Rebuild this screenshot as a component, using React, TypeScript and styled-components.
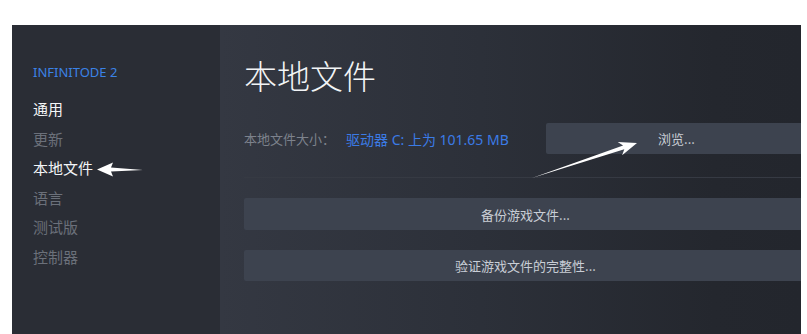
import React from "react"
import styled, { createGlobalStyle } from "styled-components"

const GlobalStyle = createGlobalStyle`
  html, body {
    margin: 0;
    padding: 0;
    background: #ffffff;
    font-family: "Noto Sans", "Noto Sans CJK SC", sans-serif;
  }
`

const navItems = [
  { label: "通用", active: true },
  { label: "更新", active: false },
  { label: "本地文件", active: true },
  { label: "语言", active: false },
  { label: "测试版", active: false },
  { label: "控制器", active: false },
]

export default function App() {
  return (
    <>
      <GlobalStyle />
      <Page>
        <Frame>
          <Sidebar>
            <GameTitle>INFINITODE 2</GameTitle>
            <NavList>
              {navItems.map((item) => (
                <NavItem key={item.label} $active={item.active}>
                  {item.label}
                </NavItem>
              ))}
            </NavList>
          </Sidebar>
          <Main>
            <Content>
              <Title>本地文件</Title>
              <InfoRow>
                <InfoText>
                  <Label>本地文件大小：</Label>
                  <Value>驱动器 C: 上为 101.65 MB</Value>
                </InfoText>
                <ActionButton $h={31}>浏览...</ActionButton>
              </InfoRow>
              <Divider />
              <ButtonStack>
                <ActionButton $h={32}>备份游戏文件...</ActionButton>
                <ActionButton $h={31}>验证游戏文件的完整性...</ActionButton>
              </ButtonStack>
            </Content>
          </Main>
        </Frame>
        <Arrows width="807" height="334" viewBox="0 0 807 334">
          <polygon
            fill="#ffffff"
            points="97,169.5 113,162.5 111,167.5 143,170 111,171.5 113,176.5"
          />
          <polygon
            fill="#ffffff"
            points="637,143 617.7,142.1 623.1,145.5 532,178 624.3,149.3 622.1,155.3"
          />
        </Arrows>
      </Page>
    </>
  )
}

const Page = styled.div`
  position: relative;
  width: 807px;
  height: 334px;
  overflow: hidden;
`

const Frame = styled.div`
  display: flex;
  margin: 25px 6px 0 12px;
  height: 309px;
`

const Sidebar = styled.div`
  width: 208px;
  flex-shrink: 0;
  background: #2a2d35;
  padding: 37px 0 0 21px;
  box-sizing: border-box;
`

const GameTitle = styled.div`
  font-family: "Noto Sans", sans-serif;
  font-size: 13px;
  line-height: 20px;
  color: #3b82e6;
  margin-bottom: 12px;
`

const NavList = styled.div`
  display: flex;
  flex-direction: column;
`

const NavItem = styled.div<{ $active: boolean }>`
  font-family: "Noto Sans CJK SC", sans-serif;
  font-size: 15px;
  line-height: 29.5px;
  color: ${(p) => (p.$active ? "#f3f5f7" : "#6b707a")};
`

const Main = styled.div`
  flex: 1;
  overflow: hidden;
  background: linear-gradient(90deg, #343842 0%, #2c3039 45%, #24272e 85%, #23262d 100%);
`

const Content = styled.div`
  padding: 29px 0 0 24px;
  margin-right: -6px;
`

const Title = styled.div`
  font-family: "Noto Sans CJK SC", sans-serif;
  font-size: 33px;
  font-weight: 300;
  line-height: 42px;
  color: #f2f4f6;
  margin-bottom: 27px;
`

const InfoRow = styled.div`
  display: grid;
  grid-template-columns: 302px 1fr;
  align-items: center;
`

const InfoText = styled.div`
  display: flex;
  align-items: center;
  white-space: nowrap;
`

const Label = styled.span`
  color: #7d828c;
  font-size: 13px;
  width: 102px;
`

const Value = styled.span`
  color: #3b7be6;
  font-size: 14px;
`

const ActionButton = styled.div<{ $h: number }>`
  height: ${(p) => p.$h}px;
  display: flex;
  align-items: center;
  justify-content: center;
  background: #3d434f;
  border-radius: 2px;
  color: #c9ced6;
  font-size: 13px;
  font-family: "Noto Sans CJK SC", sans-serif;
`

const Divider = styled.div`
  height: 1px;
  background: #363a43;
  margin: 23px 0 20px;
`

const ButtonStack = styled.div`
  display: flex;
  flex-direction: column;
  gap: 20px;
`

const Arrows = styled.svg`
  position: absolute;
  left: 0;
  top: 0;
  pointer-events: none;
`
